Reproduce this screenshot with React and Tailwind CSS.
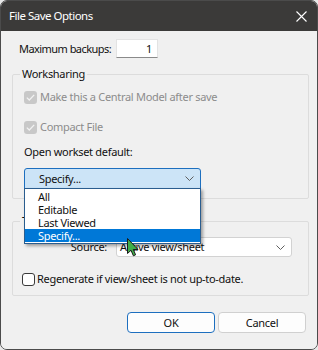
import React from "react";

const font = { fontFamily: '"Noto Sans", "Open Sans", sans-serif' };

function Chevron({ className = "" }) {
  return (
    <svg width="9" height="5" viewBox="0 0 9 5" className={className}>
      <path d="M0.5 0.5 L4.5 4.5 L8.5 0.5" fill="none" stroke="#5f5f5f" strokeWidth="1" />
    </svg>
  );
}

function DisabledCheck() {
  return (
    <span className="w-[13px] h-[13px] rounded-[3px] bg-[#c8c8c8] flex items-center justify-center shrink-0">
      <svg width="9" height="7" viewBox="0 0 9 7">
        <path d="M0.8 3.6 L3.3 6 L8.2 0.9" fill="none" stroke="#f2f2f2" strokeWidth="1.3" />
      </svg>
    </span>
  );
}

function Cursor() {
  return (
    <svg width="12" height="19" viewBox="0 0 12 19">
      <path
        d="M0.5 0.5 L0.5 15.5 L4 12.3 L6.4 17.8 L8.6 16.8 L6.3 11.5 L11 11.5 Z"
        fill="#3fae49"
        stroke="#1b1b1b"
        strokeWidth="1"
        strokeLinejoin="round"
      />
    </svg>
  );
}

export default function App() {
  const options = ["All", "Editable", "Last Viewed", "Specify..."];

  return (
    <div
      className="w-[318px] h-[350px] bg-[#e8e8e8] relative text-[11px] tracking-[-0.3px] text-[#111] whitespace-nowrap"
      style={font}
    >
      <div className="w-full h-full rounded-[7px] overflow-hidden border border-[#4b4b4b] flex flex-col">
        {/* title bar */}
        <div className="h-[30px] bg-[#3b3a39] flex items-center justify-between pl-[8px] pr-[10px] shrink-0">
          <span className="text-white text-[11.5px] tracking-[-0.5px] leading-[16px]">File Save Options</span>
          <svg width="11" height="11" viewBox="0 0 11 11">
            <path d="M0.5 0.5 L10.5 10.5 M10.5 0.5 L0.5 10.5" stroke="#ffffff" strokeWidth="1.1" />
          </svg>
        </div>

        {/* body */}
        <div className="flex-1 bg-[#f0f0f0] pl-[11px]">
          <div className="w-[297px] flex flex-col">
            <div className="flex items-center mt-[8px] h-[19px]">
              <span className="ml-[7px] w-[97px] tracking-[-0.55px] leading-[16px]">Maximum backups:</span>
              <div className="w-[42px] h-[19px] bg-white border border-[#e3e3e3] border-b-[#8a8a8a] flex items-center justify-end pr-[5px] leading-[16px]">
                1
              </div>
            </div>

            {/* Worksharing */}
            <fieldset className="mt-[8px] border border-[#dcdcdc] rounded-[2px] pl-[11px] pb-[9px]">
              <legend className="ml-[-4px] px-[2px] leading-[16px]">Worksharing</legend>
              <div className="flex items-center gap-[3px] mt-[7px] h-[16px]">
                <DisabledCheck />
                <span className="text-[#8c8c8c] leading-[16px]">Make this a Central Model after save</span>
              </div>
              <div className="flex items-center gap-[3px] mt-[14px] h-[16px]">
                <DisabledCheck />
                <span className="text-[#8c8c8c] leading-[16px]">Compact File</span>
              </div>
              <div className="mt-[9px] h-[16px] leading-[16px]">Open workset default:</div>
              <div className="relative mt-[8px] w-[177px] z-10">
                <div className="h-[21px] bg-[#cce4f7] border border-[#1d6fbf] rounded-t-[3px] flex items-center pl-[14px] pr-[6px]">
                  <span className="leading-[16px]">Specify...</span>
                  <Chevron className="ml-auto" />
                </div>
                <div className="absolute left-0 top-[20px] w-[177px] bg-white border border-[#2a5d8f] py-[1px] shadow-[2px_2px_3px_rgba(0,0,0,0.35)]">
                  {options.map((o) => (
                    <div
                      key={o}
                      className={
                        o === "Specify..."
                          ? "h-[13px] leading-[13px] pl-[13px] bg-[#0078d7] text-white"
                          : "h-[13px] leading-[13px] pl-[13px] text-[#111]"
                      }
                    >
                      {o}
                    </div>
                  ))}
                </div>
              </div>
            </fieldset>

            {/* Thumbnail */}
            <fieldset className="mt-[14px] border border-[#dcdcdc] rounded-[2px] pb-[8px]">
              <legend className="ml-[7px] px-[2px] leading-[16px]">Thumbnail Preview</legend>
              <div className="flex items-center mt-[8px]">
                <span className="flex-1 text-right pr-[9px] leading-[16px]">Source:</span>
                <div className="w-[176px] mr-[16px] h-[20px] bg-white border border-[#d2d2d2] rounded-[3px] flex items-center pl-[3px] pr-[6px]">
                  <span className="leading-[16px]">Active view/sheet</span>
                  <Chevron className="ml-auto" />
                </div>
              </div>
              <div className="flex items-center gap-[2px] mt-[14px] ml-[9px] h-[16px]">
                <span className="w-[13px] h-[13px] rounded-[3px] bg-white border border-[#3a3a3a] shrink-0" />
                <span className="leading-[16px]">Regenerate if view/sheet is not up-to-date.</span>
              </div>
            </fieldset>

            {/* buttons */}
            <div className="flex justify-end gap-[3px] mt-[16px] pr-[3px]">
              <button className="w-[88px] h-[21px] bg-[#fdfdfd] border border-[#1d6fbf] rounded-[4px] leading-[16px]">
                OK
              </button>
              <button className="w-[88px] h-[21px] bg-[#fdfdfd] border border-[#d0d0d0] rounded-[4px] leading-[16px]">
                Cancel
              </button>
            </div>
          </div>
        </div>
      </div>

      <div className="absolute left-[127px] top-[238px] z-20">
        <Cursor />
      </div>
    </div>
  );
}
